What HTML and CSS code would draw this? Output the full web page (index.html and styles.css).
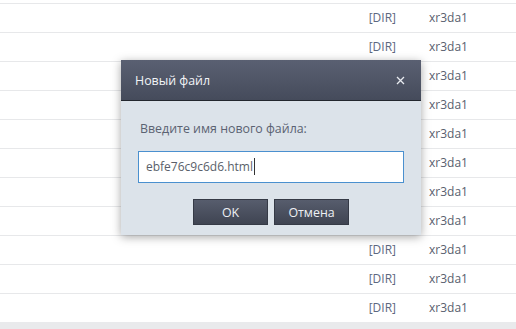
FILE: index.html
```html
<!DOCTYPE html>
<html lang="ru">
<head>
<meta charset="UTF-8">
<title>Файлы</title>
<link rel="stylesheet" href="styles.css">
</head>
<body>
<div class="file-list">
    <div class="row"><span class="name"></span><span class="type"></span><span class="owner"></span></div>
    <div class="row"><span class="name"></span><span class="type">[DIR]</span><span class="owner">xr3da1</span></div>
    <div class="row"><span class="name"></span><span class="type">[DIR]</span><span class="owner">xr3da1</span></div>
    <div class="row"><span class="name"></span><span class="type">[DIR]</span><span class="owner">xr3da1</span></div>
    <div class="row"><span class="name"></span><span class="type">[DIR]</span><span class="owner">xr3da1</span></div>
    <div class="row"><span class="name"></span><span class="type">[DIR]</span><span class="owner">xr3da1</span></div>
    <div class="row"><span class="name"></span><span class="type">[DIR]</span><span class="owner">xr3da1</span></div>
    <div class="row"><span class="name"></span><span class="type">[DIR]</span><span class="owner">xr3da1</span></div>
    <div class="row"><span class="name"></span><span class="type">[DIR]</span><span class="owner">xr3da1</span></div>
    <div class="row"><span class="name"></span><span class="type">[DIR]</span><span class="owner">xr3da1</span></div>
    <div class="row"><span class="name"></span><span class="type">[DIR]</span><span class="owner">xr3da1</span></div>
    <div class="row last"><span class="name"></span><span class="type">[DIR]</span><span class="owner">xr3da1</span></div>
</div>
<div class="footer"></div>

<!-- диалог создания файла -->
<div class="dialog">
    <div class="dialog-head">
        <span class="dialog-title">Новый файл</span>
        <span class="dialog-close">
            <svg width="9" height="9" viewBox="0 0 9 9"><path d="M1 1L8 8M8 1L1 8" stroke="#e8ebf0" stroke-width="1.3"/></svg>
        </span>
    </div>
    <div class="dialog-body">
        <div class="dialog-label">Введите имя нового файла:</div>
        <div class="dialog-input">ebfe76c9c6d6.html<span class="caret"></span></div>
        <div class="dialog-buttons">
            <button class="btn">OK</button>
            <button class="btn">Отмена</button>
        </div>
    </div>
</div>
</body>
</html>
```

FILE: styles.css
```css
body {
    margin: 0;
    background: #fff;
    font-family: "Open Sans", "Noto Sans", sans-serif;
    overflow: hidden;
}
.file-list {
    margin-top: -25px;
}
.row {
    display: grid;
    grid-template-columns: 1fr 60px 120px;
    height: 28px;
    line-height: 28px;
    border-bottom: 1px solid #e7e8ea;
    font-size: 12px;
}
.row.last {
    border-bottom: none;
}
.type {
    text-align: right;
    color: #5d6880;
    padding-right: 0;
}
.owner {
    color: #58606e;
    padding-left: 33px;
}
.footer {
    height: 12px;
    background: #e9eaec;
}
.dialog {
    position: absolute;
    left: 121px;
    top: 60px;
    width: 300px;
    box-shadow: 0 2px 9px rgba(0, 0, 0, 0.35);
}
.dialog-head {
    height: 40px;
    display: flex;
    align-items: center;
    justify-content: space-between;
    padding: 0 16px 0 14px;
    background: linear-gradient(#5a6072, #454b5b);
    border-bottom: 1px solid #23272f;
}
.dialog-title {
    color: #f2f4f7;
    font-size: 12.4px;
}
.dialog-close {
    display: flex;
}
.dialog-body {
    background: #dce3ea;
    padding: 19px 17px 10px;
}
.dialog-label {
    font-size: 12.4px;
    color: #5b6272;
    padding-left: 2px;
    line-height: 18px;
}
.dialog-input {
    margin-top: 13px;
    height: 30px;
    line-height: 30px;
    background: #fff;
    border: 1px solid #4a90cf;
    padding: 0 7px;
    font-size: 12px;
    color: #5a5f6a;
}
.caret {
    display: inline-block;
    width: 1px;
    height: 17px;
    background: #333;
    vertical-align: -4px;
    margin-left: 1px;
}
.dialog-buttons {
    margin-top: 16px;
    display: flex;
    justify-content: center;
    gap: 6px;
}
.btn {
    width: 75px;
    height: 26px;
    border: 1px solid #353a46;
    background: linear-gradient(#575d6d, #3f4452);
    color: #eef0f4;
    font-family: "Open Sans", "Noto Sans", sans-serif;
    font-size: 12.4px;
    padding: 0;
}
```
